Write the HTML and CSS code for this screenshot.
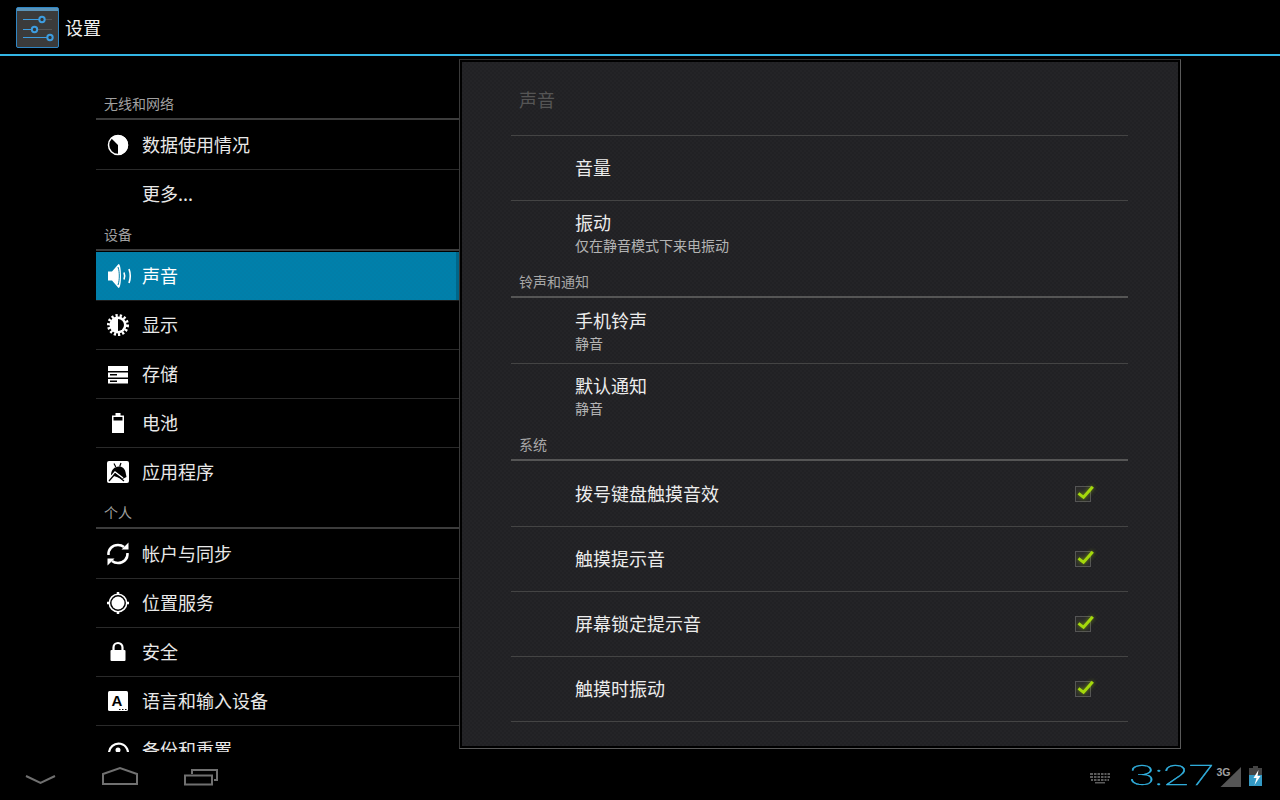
FILE: index.html
```html
<!DOCTYPE html>
<html lang="zh-CN">
<head>
<meta charset="utf-8">
<title>设置</title>
<link rel="stylesheet" href="styles.css">
</head>
<body>
<div class="screen">
  <header class="actionbar">
    <svg class="app-icon" width="44" height="42" viewBox="0 0 44 42">
      <rect x="0.5" y="0.5" width="42" height="40" rx="1.5" fill="#3b3b3b" stroke="#2f86c4"/>
      <rect x="1" y="1" width="41" height="3" fill="#5a93b8"/>
      <g fill="none" stroke-width="1">
        <path d="M7 12.5H36M7 22.5H36M7 30.5H36" stroke="#555"/>
        <path d="M7 12.5H25M7 22.5H18M7 30.5H33" stroke="#3d9de0"/>
        <g stroke="#3d9de0" stroke-width="2" fill="#333">
          <circle cx="26" cy="12.5" r="2.7"/><circle cx="18.5" cy="22.5" r="2.7"/><circle cx="34" cy="30.5" r="2.7"/>
        </g>
      </g>
    </svg>
    <h1 class="app-title">设置</h1>
  </header>

  <main class="main">
    <nav class="side">
      <h2 class="group first">无线和网络</h2>
      <a class="item"><svg class="ico" viewBox="0 0 32 32"><circle cx="16" cy="16" r="9.5" fill="none" stroke="#fff" stroke-width="1.5"/><path d="M16 16L9 9A10 10 0 1 1 16 26z" fill="#fff"/></svg><span>数据使用情况</span></a>
      <a class="item last"><span class="ico"></span><span>更多...</span></a>

      <h2 class="group">设备</h2>
      <a class="item on"><svg class="ico" viewBox="0 0 32 32"><path d="M6 11.500h4L16.500 4c1.800 0 2.500 6 2.500 12s-.7 12-2.500 12L10 20.500H6z" fill="#fff"/><path d="M16 7c1 3 1.300 6 1.300 9s-.3 6-1.300 9" fill="none" stroke="#0080ab" stroke-width="1"/><path d="M22 12.500c.9 2.300 .9 4.700 0 7M27 9c1.700 4.700 1.700 9.300 0 14" fill="none" stroke="#fff" stroke-width="1.600"/></svg><span>声音</span></a>
      <a class="item"><svg class="ico" viewBox="0 0 32 32"><circle cx="16" cy="16" r="8.500" fill="#fff"/><circle cx="16" cy="16" r="9.500" fill="none" stroke="#fff" stroke-width="3" stroke-dasharray="2.200 2"/><path d="M16 10a6 6 0 0 1 0 12z" fill="#000"/></svg><span>显示</span></a>
      <a class="item"><svg class="ico" viewBox="0 0 32 32"><path d="M6 8h20v5H6zM6 14.500h20v5H6zM6 21h20v4.500H6z" fill="#fff"/><path d="M8 16h7v1.500H8zM8 22.500h7V24H8z" fill="#000"/></svg><span>存储</span></a>
      <a class="item"><svg class="ico" viewBox="0 0 32 32"><path d="M13.500 6h5v2.500H22V26H10V8.500h3.500z" fill="#fff"/><path d="M11.500 10h9v3.500h-9z" fill="#000"/></svg><span>电池</span></a>
      <a class="item last"><svg class="ico" viewBox="0 0 32 32"><rect x="5" y="5" width="22" height="22" rx="2" fill="#fff"/><path d="M9 19c0-5 3.500-8.500 8-8.500 2.800 0 5.500 1.500 6.500 5.500l1 5-4 2z" fill="#000"/><path d="M7 23l6-7 8 6" fill="none" stroke="#fff" stroke-width="1.500"/><path d="M7 25l6-7 9 7" fill="none" stroke="#000" stroke-width="1.300"/><path d="M12 7.500l1.800 3.500M19 7l-1.300 3.500" stroke="#000" stroke-width="1.200"/></svg><span>应用程序</span></a>

      <h2 class="group">个人</h2>
      <a class="item"><svg class="ico" viewBox="0 0 32 32"><g fill="none" stroke="#fff" stroke-width="2.500"><path d="M6.500 17c-.5-6 4-10 9.500-10 2.500 0 4.500.8 6 2"/><path d="M25.500 15c.5 6-4 10-9.500 10-2.500 0-4.500-.8-6-2"/></g><path d="M19.500 11.500h7v-7zM12.500 20.500h-7v7z" fill="#fff"/></svg><span>帐户与同步</span></a>
      <a class="item"><svg class="ico" viewBox="0 0 32 32"><circle cx="16" cy="16" r="6.500" fill="#fff"/><circle cx="16" cy="16" r="8.700" fill="none" stroke="#fff" stroke-width="1.500"/><path d="M16 5v3M16 24v3M5 16h3M24 16h3" stroke="#fff" stroke-width="2.500"/></svg><span>位置服务</span></a>
      <a class="item"><svg class="ico" viewBox="0 0 32 32"><rect x="8.500" y="14" width="15" height="11" rx="1" fill="#fff"/><path d="M11.500 15v-3.500a4.500 4.500 0 0 1 9 0V15" fill="none" stroke="#fff" stroke-width="2.200"/></svg><span>安全</span></a>
      <a class="item"><svg class="ico" viewBox="0 0 32 32"><rect x="6" y="6" width="20" height="20" rx="1.500" fill="#fff"/><text class="key-a" x="15" y="20.500" text-anchor="middle">A</text><path d="M17 24h1.500v1H17zM20 24h1.500v1H20zM23 24h1.500v1H23z" fill="#000"/></svg><span>语言和输入设备</span></a>
      <a class="item last"><svg class="ico" viewBox="0 0 32 32"><path d="M7 19.500a9.500 9.500 0 1 1 3 6.500" fill="none" stroke="#fff" stroke-width="2.200"/><circle cx="16" cy="16" r="2.500" fill="#fff"/><path d="M4 18h7l-3.500 4z" fill="#fff"/></svg><span>备份和重置</span></a>
    </nav>

    <section class="panel">
      <div class="panel-inner">
        <h2 class="panel-title">声音</h2>
        <div class="row"><div class="row-text"><div class="row-name">音量</div></div></div>
        <div class="row last"><div class="row-text"><div class="row-name">振动</div><div class="row-sub">仅在静音模式下来电振动</div></div></div>
        <h3 class="group sub">铃声和通知</h3>
        <div class="row"><div class="row-text"><div class="row-name">手机铃声</div><div class="row-sub">静音</div></div></div>
        <div class="row last"><div class="row-text"><div class="row-name">默认通知</div><div class="row-sub">静音</div></div></div>
        <h3 class="group sub">系统</h3>
        <div class="row"><div class="row-text"><div class="row-name">拨号键盘触摸音效</div></div><svg class="check" viewBox="0 0 24 24"><rect class="box" x="2.500" y="4.500" width="15" height="15"/><path class="tick" d="M5.500 11.300l5 4 9.300-10.600"/></svg></div>
        <div class="row"><div class="row-text"><div class="row-name">触摸提示音</div></div><svg class="check" viewBox="0 0 24 24"><rect class="box" x="2.500" y="4.500" width="15" height="15"/><path class="tick" d="M5.500 11.300l5 4 9.300-10.600"/></svg></div>
        <div class="row"><div class="row-text"><div class="row-name">屏幕锁定提示音</div></div><svg class="check" viewBox="0 0 24 24"><rect class="box" x="2.500" y="4.500" width="15" height="15"/><path class="tick" d="M5.500 11.300l5 4 9.300-10.600"/></svg></div>
        <div class="row"><div class="row-text"><div class="row-name">触摸时振动</div></div><svg class="check" viewBox="0 0 24 24"><rect class="box" x="2.500" y="4.500" width="15" height="15"/><path class="tick" d="M5.500 11.300l5 4 9.300-10.600"/></svg></div>
      </div>
    </section>
  </main>

  <footer class="navbar">
    <svg class="nav-btn" width="32" height="48" viewBox="0 0 32 48"><path d="M2 24l14.500 7L31 24" fill="none" stroke="#707070" stroke-width="2"/></svg>
    <svg class="nav-btn" width="40" height="48" viewBox="0 0 40 48"><path d="M4 32V22l17-6 17 6v10z" fill="none" stroke="#707070" stroke-width="2"/></svg>
    <svg class="nav-btn" width="40" height="48" viewBox="0 0 40 48"><path d="M3 23.500h27v9H3zM10 22v-4h25v10h-3" fill="none" stroke="#707070" stroke-width="2"/></svg>
    <div class="status">
      <svg class="kbd" width="20" height="12" viewBox="0 0 20 12"><g fill="#5a5a5a"><path d="M0 1h20v2H0zM0 4h20v2H0zM1 7h18v2H1z"/><path d="M5 10h10v1.500H5z"/></g><path d="M3.500 1v8M7 1v8M10.500 1v8M14 1v8M17 1v8" stroke="#000" stroke-width="1"/></svg>
      <div class="clock"><span class="clock-text">3:27</span></div>
      <svg class="signal" width="26" height="24" viewBox="0 0 26 24"><path d="M4.500 22L25 2v20z" fill="#555"/><text class="net" x="0.500" y="11">3G</text></svg>
      <svg class="batt" width="15" height="20" viewBox="0 0 15 20"><path d="M5 0h5v2h4v18H1V2h4z" fill="#444"/><path d="M1 9h13v11H1z" fill="#3399c4"/><path d="M10.500 4L5.500 12h3L6.500 19 12.500 10h-3z" fill="#fff"/></svg>
    </div>
  </footer>
</div>
</body>
</html>
```
FILE: styles.css
```css
* { box-sizing: border-box; }
html, body { margin: 0; padding: 0; background: #000; }
body { font-family: "Noto Sans CJK SC", "Noto Sans", sans-serif; color: #e8e8e8; }
.screen { width: 1280px; height: 800px; display: flex; flex-direction: column; overflow: hidden; background: #000; }

.actionbar { height: 56px; flex: none; display: flex; align-items: center; padding-left: 16px; padding-top: 2px; border-bottom: 2px solid #33b5e5; gap: 5px; }
.app-icon { display: block; flex: none; }
.app-title { margin: 0 0 2px; font-size: 18px; font-weight: 400; line-height: 24px; color: #f0f0f0; }

.main { height: 696px; flex: none; display: flex; padding-left: 96px; }
.side { width: 363px; flex: none; height: 696px; overflow: hidden; }

.group { margin: 0 0 1px; height: 33px; padding: 6px 0 7px 8px; font-size: 14px; line-height: 20px; font-weight: 400; color: #a0a0a0; border-bottom: 2px solid #3c3c3c; }
.group.first { margin-top: 31px; }
.group.sub { color: #a8a8a8; }

.item { display: flex; align-items: center; height: 49px; padding-left: 6px; border-bottom: 1px solid #2a2a2a; font-size: 18px; gap: 8px; color: #e8e8e8; }
.item > span { margin-bottom: 2px; }
.item.last { height: 48px; border-bottom: 0; }
.item.on { background: repeating-conic-gradient(#0080ab 0 25%, #027ea8 0 50%) 0 0 / 4px 4px; border-bottom-color: #1d1d1d; box-shadow: inset -3px 0 0 #00668a; color: #fff; }
.ico { width: 32px; height: 32px; flex: none; display: block; }
.key-a { font-family: "Liberation Sans", sans-serif; font-size: 15px; font-weight: 700; fill: #000; }

.panel { width: 722px; height: 690px; margin-top: 3px; flex: none; padding: 2px; border: 1px solid; border-color: #333 #5a5a5a #5a5a5a #3a3a3a; background: #000; }
.panel-inner { width: 716px; height: 684px; padding: 0 50px 0 49px; background: repeating-conic-gradient(#242427 0 25%, #212124 0 50%) 0 0 / 4px 4px; overflow: hidden; }
.panel-title { margin: 0; height: 74px; padding: 23px 0 0 8px; font-size: 18px; line-height: 28px; font-weight: 400; color: #555; border-bottom: 1px solid #444; }

.row { height: 65px; display: flex; align-items: center; padding-left: 64px; padding-bottom: 1px; border-bottom: 1px solid #444; }
.row.last { height: 64px; border-bottom: 0; }
.row-text { flex: 1; }
.row-name { font-size: 18px; line-height: 24px; margin-bottom: 1px; color: #ececec; }
.row-sub { font-size: 14px; line-height: 20px; color: #b4b4b4; }
.check { width: 24px; height: 24px; flex: none; margin-right: 31px; margin-top: 1px; }
.box { fill: #2b2b2b; stroke: #555; }
.tick { fill: none; stroke: #a4d80c; stroke-width: 3; filter: drop-shadow(0 0 2px rgba(153, 204, 0, .6)); }

.panel-inner .group { padding-left: 8px; border-bottom-color: #555; }

.navbar { height: 48px; flex: none; display: flex; align-items: flex-start; padding: 0 17px 0 24px; gap: 43px; }
.nav-btn { display: block; flex: none; }
.status { margin-left: auto; display: flex; align-items: flex-start; }
.kbd { display: block; margin-top: 20px; margin-right: 19px; }
.clock { width: 87px; height: 48px; overflow: visible; }
.clock-text { display: inline-block; font-family: Roboto, "Liberation Sans", sans-serif; font-weight: 100; -webkit-text-stroke: 0.35px #33b5e5; font-size: 28px; line-height: 48px; color: #33b5e5; transform: scaleX(1.68); transform-origin: 0 50%; white-space: nowrap; }
.signal { display: block; margin-top: 13px; }
.net { font-family: "Liberation Sans", sans-serif; font-size: 10.500px; font-weight: 700; fill: #a0a0a0; }
.batt { display: block; margin-top: 14px; margin-left: 6px; }
```
